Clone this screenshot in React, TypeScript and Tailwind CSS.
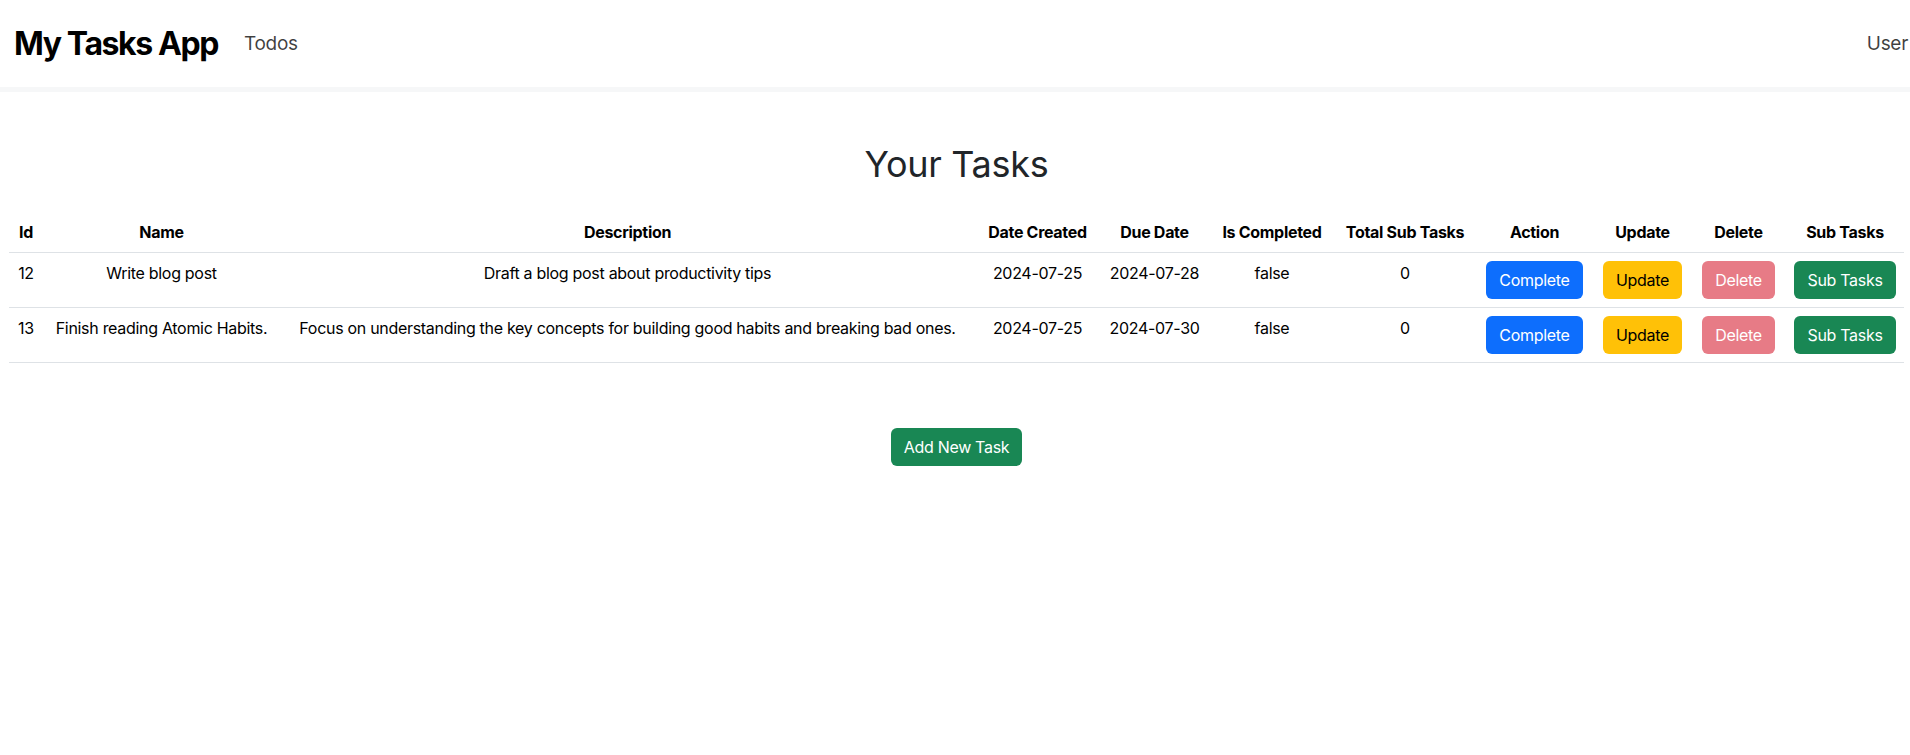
import React from "react";

const tasks = [
  {
    id: 12,
    name: "Write blog post",
    description: "Draft a blog post about productivity tips",
    created: "2024-07-25",
    due: "2024-07-28",
    completed: "false",
    subs: 0,
  },
  {
    id: 13,
    name: "Finish reading Atomic Habits.",
    description:
      "Focus on understanding the key concepts for building good habits and breaking bad ones.",
    created: "2024-07-25",
    due: "2024-07-30",
    completed: "false",
    subs: 0,
  },
];

const headers = [
  "Id",
  "Name",
  "Description",
  "Date Created",
  "Due Date",
  "Is Completed",
  "Total Sub Tasks",
  "Action",
  "Update",
  "Delete",
  "Sub Tasks",
];

const colClasses = [
  "w-[34px]",
  "w-[237px]",
  "w-[695px]",
  "w-[125px]",
  "w-[109px]",
  "w-[126px]",
  "w-[140px]",
  "w-[119px]",
  "w-[97px]",
  "w-[95px]",
  "w-[118px]",
];

const btn =
  "inline-block px-3 py-[6px] text-[16px] leading-6 rounded-[6px] border border-transparent whitespace-nowrap tracking-[-0.3px]";

const cell = "px-2 py-2 border-b border-[#dee2e6] align-top whitespace-nowrap";

export default function App() {
  return (
    <div
      className="min-h-[755px] bg-white text-black"
      style={{ fontFamily: "Inter, 'Noto Sans', sans-serif" }}
    >
      <nav className="h-[87px] flex items-center justify-between pl-[14px] pr-[2px]">
        <div className="flex items-center">
          <span className="text-[32px] font-bold leading-none tracking-[-1.4px] text-black">
            My Tasks App
          </span>
          <span className="ml-[26px] text-[19px] text-[#000000c0] leading-none tracking-[-0.3px]">
            Todos
          </span>
        </div>
        <span className="text-[19px] text-[#000000c0] leading-none tracking-[-0.3px]">
          User
        </span>
      </nav>
      <div className="h-[5px] bg-[#f6f7f8]" />

      <main className="pl-[9px] pr-[6px]">
        <h1 className="mt-[51px] mb-[26px] text-center text-[36px] leading-[43px] text-[#212529] font-normal tracking-[-0.3px]">
          Your Tasks
        </h1>

        <table className="w-[1895px] table-fixed border-collapse text-center text-[16px] leading-6 tracking-[-0.3px]">
          <colgroup>
            {colClasses.map((c, i) => (
              <col key={i} className={c} />
            ))}
          </colgroup>
          <thead>
            <tr>
              {headers.map((h) => (
                <th key={h} className={`${cell} font-bold`}>
                  {h}
                </th>
              ))}
            </tr>
          </thead>
          <tbody>
            {tasks.map((t) => (
              <tr key={t.id}>
                <td className={cell}>{t.id}</td>
                <td className={cell}>{t.name}</td>
                <td className={cell}>{t.description}</td>
                <td className={cell}>{t.created}</td>
                <td className={cell}>{t.due}</td>
                <td className={cell}>{t.completed}</td>
                <td className={cell}>{t.subs}</td>
                <td className={cell}>
                  <button className={`${btn} bg-[#0d6efd] text-white`}>Complete</button>
                </td>
                <td className={cell}>
                  <button className={`${btn} bg-[#ffc107] text-black`}>Update</button>
                </td>
                <td className={cell}>
                  <button className={`${btn} bg-[#e77b86] text-white`}>Delete</button>
                </td>
                <td className={cell}>
                  <button className={`${btn} bg-[#198754] text-white`}>Sub Tasks</button>
                </td>
              </tr>
            ))}
          </tbody>
        </table>

        <div className="mt-[65px] flex justify-center">
          <button className={`${btn} bg-[#198754] text-white`}>Add New Task</button>
        </div>
      </main>
    </div>
  );
}
